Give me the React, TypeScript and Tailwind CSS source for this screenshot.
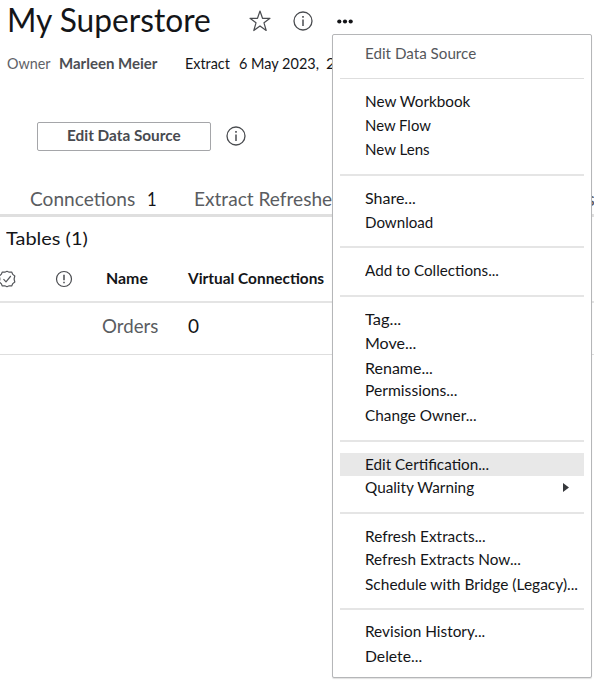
import { useLayoutEffect, useRef, useState } from "react";

// Text scaled horizontally to occupy a set width.
function Fit({ w, children, className = "" }: { w: number; children: string; className?: string }) {
  const ref = useRef<HTMLSpanElement>(null);
  const [scale, setScale] = useState(1);
  useLayoutEffect(() => {
    if (ref.current) setScale(w / ref.current.offsetWidth);
  }, [w]);
  return (
    <span className={`inline-block shrink-0 whitespace-nowrap text-left ${className}`} style={{ width: w }}>
      <span ref={ref} className="inline-block origin-left" style={{ transform: `scaleX(${scale})` }}>
        {children}
      </span>
    </span>
  );
}

function Info({ className = "" }: { className?: string }) {
  return (
    <svg viewBox="0 0 20 20" className={`size-5 shrink-0 ${className}`} fill="none" stroke="#4a4c50" strokeWidth="1.3">
      <circle cx="10" cy="10" r="9" />
      <path d="M10 8.5V15" strokeWidth="1.5" />
      <path d="M10 5v1.8" strokeWidth="1.6" />
    </svg>
  );
}

type Item = { label: string; w: number; h: string; tone?: string; arrow?: boolean };

const groups: { pad: string; items: Item[] }[] = [
  { pad: "pt-[6px] h-[43px]", items: [{ label: "Edit Data Source", w: 111, h: "h-6", tone: "text-[#55575c]" }] },
  {
    pad: "pt-[9px] h-[94px]",
    items: [
      { label: "New Workbook", w: 105, h: "h-6" },
      { label: "New Flow", w: 66, h: "h-6" },
      { label: "New Lens", w: 65, h: "h-6" },
    ],
  },
  {
    pad: "pt-[10px] h-[70px]",
    items: [
      { label: "Share...", w: 51, h: "h-6" },
      { label: "Download", w: 68, h: "h-6" },
    ],
  },
  { pad: "pt-[10px] h-[47px]", items: [{ label: "Add to Collections...", w: 134, h: "h-6" }] },
  {
    pad: "pt-[10px] h-[143px]",
    items: [
      { label: "Tag...", w: 36, h: "h-6" },
      { label: "Move...", w: 51, h: "h-[25px]" },
      { label: "Rename...", w: 68, h: "h-[22px]" },
      { label: "Permissions...", w: 92, h: "h-[25px]" },
      { label: "Change Owner...", w: 112, h: "h-6" },
    ],
  },
  {
    pad: "pt-[11px] h-[70px]",
    items: [
      { label: "Edit Certification...", w: 124, h: "h-[23px]", tone: "bg-[#e8e8e8] leading-[22px]" },
      { label: "Quality Warning", w: 109, h: "h-6 -mt-px", arrow: true },
    ],
  },
  {
    pad: "pt-[10px] h-[94px]",
    items: [
      { label: "Refresh Extracts...", w: 121, h: "h-[23px]" },
      { label: "Refresh Extracts Now...", w: 156, h: "h-[25px]" },
      { label: "Schedule with Bridge (Legacy)...", w: 213, h: "h-6" },
    ],
  },
  {
    pad: "pt-[9px]",
    items: [
      { label: "Revision History...", w: 120, h: "h-[25px]" },
      { label: "Delete...", w: 57, h: "h-6" },
    ],
  },
];

function Menu() {
  return (
    <div className="absolute left-[332px] top-[34px] h-[644px] w-[260px] rounded-[2px] border border-[#b5b6b8] bg-white px-[7px] shadow-[0_1px_1px_rgba(0,0,0,0.12)]">
      {groups.map((g, i) => (
        <div key={i}>
          {i > 0 && <div className={i === 1 ? "mb-px h-px bg-[#dedede]" : "h-[2px] bg-[#e5e5e5]"} />}
          <div className={g.pad}>
            {g.items.map((it) => (
              <div
                key={it.label}
                className={`flex w-[244px] items-start pl-[25px] text-[16px] ${it.tone?.includes("leading") ? "" : "leading-6"} ${it.h} ${it.tone ?? ""}`}
              >
                <Fit w={it.w}>{it.label}</Fit>
                {it.arrow && (
                  <svg viewBox="0 0 6 9" className="ml-auto mr-[15px] mt-2 h-[9px] w-[6px]">
                    <path d="M0 0L6 4.5L0 9Z" fill="#36383c" />
                  </svg>
                )}
              </div>
            ))}
          </div>
        </div>
      ))}
    </div>
  );
}

export default function App() {
  return (
    <div className="relative h-[682px] w-[594px] overflow-hidden bg-white font-['Lato','Liberation_Sans',sans-serif] text-[#141518]">
      <header className="flex h-[42px] items-start pl-[7px]">
        <Fit w={204} className="text-[32px] leading-[40px]">My Superstore</Fit>
        <svg viewBox="0 0 22 22" className="ml-[38px] mt-[10px] size-[22px]" fill="none" stroke="#4a4c50" strokeWidth="1.2" strokeLinejoin="round">
          <path d="M11 1L13.5 8.3H21L15 12.8L17.2 20.5L11 15.9L4.8 20.5L7 12.8L1 8.3H8.5Z" />
        </svg>
        <Info className="ml-[22px] mt-[11px]" />
        <svg viewBox="0 0 16 5" className="ml-6 mt-[19px] h-[5px] w-4" fill="#141518">
          <circle cx="2.3" cy="2.5" r="2.1" />
          <circle cx="8" cy="2.5" r="2.1" />
          <circle cx="13.7" cy="2.5" r="2.1" />
        </svg>
      </header>
      <div className="flex h-[80px] items-start pl-[7px] pt-[9px] text-[15px] leading-6">
        <Fit w={44} className="text-[#606267]">Owner</Fit>
        <Fit w={98} className="ml-2 font-bold text-[#4c4e53]">Marleen Meier</Fit>
        <Fit w={45} className="ml-[28px]">Extract</Fit>
        <Fit w={80} className="ml-[9px]">6 May 2023,</Fit>
        <Fit w={42} className="ml-[7px]">22:51</Fit>
      </div>
      <div className="flex h-[62px] items-start pl-[37px]">
        <button className="flex h-[29px] w-[174px] items-start justify-center rounded-[2px] border border-[#a5a6a9] text-[16px] font-bold leading-[24px] text-[#484a4f]">
          <Fit w={114}>Edit Data Source</Fit>
        </button>
        <Info className="ml-[15px] mt-1" />
      </div>
      <nav className="flex h-[33px] items-start border-b-[3px] border-[#dfdfdf] pl-[30px] text-[20px] leading-[28px] text-[#5a5c61]">
        <Fit w={105}>Conncetions</Fit>
        <Fit w={10} className="ml-3 text-[#141518]">1</Fit>
        <Fit w={146} className="ml-[37px]">Extract Refreshes</Fit>
        <span className="ml-auto mr-[-1px]">s</span>
      </nav>
      <h2 className="h-[42px] pl-[6px] text-[18px] leading-[42px]">
        <Fit w={82}>Tables (1)</Fit>
      </h2>
      <div className="flex h-[44px] items-start border-b-2 border-[#e4e4e4] text-[15.5px] font-bold leading-[38px]">
        <svg viewBox="0 0 18 18" className="-ml-[2px] mt-[11px] size-[18px]" fill="none" stroke="#55575b" strokeWidth="1.2" strokeLinejoin="round">
          <path d="M9 1.3L11.2 2.2L13.7 2.1L14.8 4.4L16.8 6L16.1 9L16.8 12L14.8 13.6L13.7 15.9L11.2 15.8L9 16.7L6.8 15.8L4.3 15.9L3.2 13.6L1.2 12L1.9 9L1.2 6L3.2 4.4L4.3 2.1L6.8 2.2Z" />
          <path d="M5.5 9.2L8 11.8L12.8 6" />
        </svg>
        <svg viewBox="0 0 18 18" className="ml-[39px] mt-[11px] size-[18px]" fill="none" stroke="#4a4c50" strokeWidth="1.2">
          <circle cx="9" cy="9" r="7.5" />
          <path d="M9 4.8v5.5M9 11.7v1.6" strokeWidth="1.5" />
        </svg>
        <Fit w={42} className="ml-[33px]">Name</Fit>
        <Fit w={136} className="ml-[40px]">Virtual Connections</Fit>
      </div>
      <div className="flex h-[52px] items-start border-b border-[#dedede] text-[19px] leading-[46px]">
        <Fit w={56} className="ml-[102px] text-[#5a5c61]">Orders</Fit>
        <Fit w={11} className="ml-[30px]">0</Fit>
      </div>
      <Menu />
    </div>
  );
}
